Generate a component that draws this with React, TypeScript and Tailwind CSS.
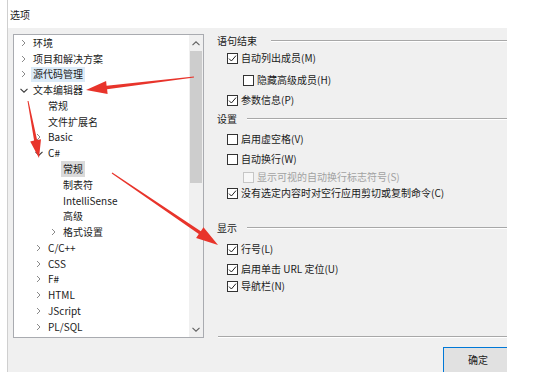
import React from "react";

type Item = { t: string; l: number; c?: "r" | "d"; hover?: boolean; sel?: boolean };

const items: Item[] = [
  { t: "环境", l: 0, c: "r" },
  { t: "项目和解决方案", l: 0, c: "r" },
  { t: "源代码管理", l: 0, c: "r", hover: true },
  { t: "文本编辑器", l: 0, c: "d" },
  { t: "常规", l: 1 },
  { t: "文件扩展名", l: 1 },
  { t: "Basic", l: 1, c: "r" },
  { t: "C#", l: 1, c: "d" },
  { t: "常规", l: 2, sel: true },
  { t: "制表符", l: 2 },
  { t: "IntelliSense", l: 2 },
  { t: "高级", l: 2 },
  { t: "格式设置", l: 2, c: "r" },
  { t: "C/C++", l: 1, c: "r" },
  { t: "CSS", l: 1, c: "r" },
  { t: "F#", l: 1, c: "r" },
  { t: "HTML", l: 1, c: "r" },
  { t: "JScript", l: 1, c: "r" },
  { t: "PL/SQL", l: 1, c: "r" },
];

const padByLevel = ["pl-[4px]", "pl-[19px]", "pl-[34px]"];

function ChevronRight() {
  return (
    <svg width="5" height="8" viewBox="0 0 5 8">
      <path d="M1 1 L4 4 L1 7" fill="none" stroke="#8a8a8a" strokeWidth="1" />
    </svg>
  );
}
function ChevronDown({ color = "#3a3a3a" }: { color?: string }) {
  return (
    <svg width="8" height="5" viewBox="0 0 8 5">
      <path d="M0.5 0.8 L4 4.2 L7.5 0.8" fill="none" stroke={color} strokeWidth="1.1" />
    </svg>
  );
}
function ChevronUp() {
  return (
    <svg width="8" height="5" viewBox="0 0 8 5">
      <path d="M0.5 4.2 L4 0.8 L7.5 4.2" fill="none" stroke="#606060" strokeWidth="1.1" />
    </svg>
  );
}

function TreeRow({ it }: { it: Item }) {
  return (
    <div className={`h-[15.78px] flex items-center ${padByLevel[it.l]}`}>
      <div className="w-[15px] h-full flex items-center pl-[3px] shrink-0">
        {it.c === "r" && <ChevronRight />}
        {it.c === "d" && (
          <div className="ml-[-1px]">
            <ChevronDown />
          </div>
        )}
      </div>
      <span
        className={`h-full flex items-center whitespace-nowrap ${
          it.hover ? "bg-[#dcebf8] ml-[-2px] px-[2px]" : it.sel ? "bg-[#dadada] ml-[-2px] px-[2px]" : ""
        }`}
      >
        {it.t}
      </span>
    </div>
  );
}

function Box({ checked, disabled }: { checked?: boolean; disabled?: boolean }) {
  return (
    <div
      className={`w-[11px] h-[11px] shrink-0 border flex items-center justify-center ${
        disabled ? "border-[#c6c6c6] bg-[#f7f7f7]" : "border-[#333333] bg-white"
      }`}
    >
      {checked && (
        <svg width="9" height="9" viewBox="0 0 9 9">
          <path d="M1 4.6 L3.4 7 L8 1.6" fill="none" stroke="#222" strokeWidth="1" />
        </svg>
      )}
    </div>
  );
}

function Check({
  label,
  checked,
  disabled,
  indent,
  mt,
}: {
  label: string;
  checked?: boolean;
  disabled?: boolean;
  indent?: boolean;
  mt: string;
}) {
  return (
    <div className={`h-[16px] flex items-center gap-[3px] ${indent ? "pl-[26px]" : "pl-[10px]"} ${mt}`}>
      <Box checked={checked} disabled={disabled} />
      <span className={`whitespace-nowrap ${disabled ? "text-[#a2a2a2]" : ""}`}>{label}</span>
    </div>
  );
}

function Header({ label, mt, gap }: { label: string; mt: string; gap: string }) {
  return (
    <div className={`h-[16px] flex items-center ${mt}`}>
      <span className="whitespace-nowrap">{label}</span>
      <div className={`flex-1 h-[2px] border-t border-t-[#a8a8a8] border-b border-b-white ${gap}`} />
    </div>
  );
}

type P = [number, number];
function arrowPoints(tail: P, tip: P, headLen: number, headW: number, tailW: number, neckW: number) {
  const dx = tip[0] - tail[0];
  const dy = tip[1] - tail[1];
  const len = Math.hypot(dx, dy);
  const ux = dx / len;
  const uy = dy / len;
  const px = -uy;
  const py = ux;
  const bx = tip[0] - ux * headLen;
  const by = tip[1] - uy * headLen;
  const pts: P[] = [
    [tail[0] + (px * tailW) / 2, tail[1] + (py * tailW) / 2],
    [bx + (px * neckW) / 2, by + (py * neckW) / 2],
    [bx + (px * headW) / 2, by + (py * headW) / 2],
    tip,
    [bx - (px * headW) / 2, by - (py * headW) / 2],
    [bx - (px * neckW) / 2, by - (py * neckW) / 2],
    [tail[0] - (px * tailW) / 2, tail[1] - (py * tailW) / 2],
  ];
  return pts.map((p) => `${p[0].toFixed(1)},${p[1].toFixed(1)}`).join(" ");
}

export default function App() {
  return (
    <div className="relative w-[534px] h-[372px] bg-white overflow-hidden text-[10px] leading-none text-[#1b1b1b] font-['Noto_Sans_CJK_SC','Noto_Sans',sans-serif]">
      <div className="ml-[7px] w-[500px] h-full border-l border-l-[#cfcfcf] flex flex-col">
        <div className="h-[28px] shrink-0 bg-white pl-[2px] pt-[10px]">
          <span>选项</span>
        </div>
        <div className="flex-1 bg-[#f0f0f0] overflow-hidden flex flex-col">
          <div className="flex pt-[6px] pl-[5px]">
            {/* Tree */}
            <div className="w-[191px] h-[304px] shrink-0 border border-[#a9abb0] bg-white flex">
              <div className="flex-1 flex flex-col overflow-hidden">
                {items.map((it, i) => (
                  <TreeRow key={i} it={it} />
                ))}
              </div>
              <div className="w-[14px] shrink-0 bg-[#f0f0f0] flex flex-col">
                <div className="h-[15px] flex items-center justify-center pt-[1px]">
                  <ChevronUp />
                </div>
                <div className="h-[132px] mt-[1px] mx-[1px] bg-[#cdcdcd]" />
                <div className="flex-1" />
                <div className="h-[15px] flex items-center justify-center pb-[1px]">
                  <ChevronDown color="#606060" />
                </div>
              </div>
            </div>
            {/* Right panel */}
            <div className="flex-1 ml-[13px] h-[304px] flex flex-col">
              <Header label="语句结束" mt="mt-[-1px]" gap="ml-[14px]" />
              <Check label="自动列出成员(M)" checked mt="mt-[1px]" />
              <Check label="隐藏高级成员(H)" indent mt="mt-[6px]" />
              <Check label="参数信息(P)" checked mt="mt-[4px]" />
              <Header label="设置" mt="mt-[3px]" gap="ml-[10px]" />
              <Check label="启用虚空格(V)" mt="mt-[4px]" />
              <Check label="自动换行(W)" mt="mt-[4px]" />
              <Check label="显示可视的自动换行标志符号(S)" indent disabled mt="mt-[2px]" />
              <Check label="没有选定内容时对空行应用剪切或复制命令(C)" checked mt="mt-[0px]" />
              <Header label="显示" mt="mt-[19px]" gap="ml-[10px]" />
              <Check label="行号(L)" checked mt="mt-[5px]" />
              <Check label="启用单击 URL 定位(U)" checked mt="mt-[4px]" />
              <Check label="导航栏(N)" checked mt="mt-[1px]" />
              <div className="flex-1" />
              <div className="ml-[1px] h-[2px] border-t border-t-[#a8a8a8] border-b border-b-white" />
            </div>
          </div>
          <div className="pl-[435px] pt-[9px] flex">
            <div className="w-[70px] h-[26px] shrink-0 border border-[#0078d7] bg-[#e1e1e1] flex items-center justify-center">
              <span>确定</span>
            </div>
          </div>
        </div>
      </div>
      <svg className="absolute left-0 top-0 pointer-events-none" width="534" height="372">
        <polygon fill="#e8342b" points={arrowPoints([194, 77], [86, 90], 21, 13, 1, 3.5)} />
        <polygon fill="#e8342b" points={arrowPoints([28, 101], [39, 158], 18, 11, 1, 3)} />
        <polygon fill="#e8342b" points={arrowPoints([112, 173], [218, 245], 22, 13, 1, 3.5)} />
      </svg>
    </div>
  );
}
